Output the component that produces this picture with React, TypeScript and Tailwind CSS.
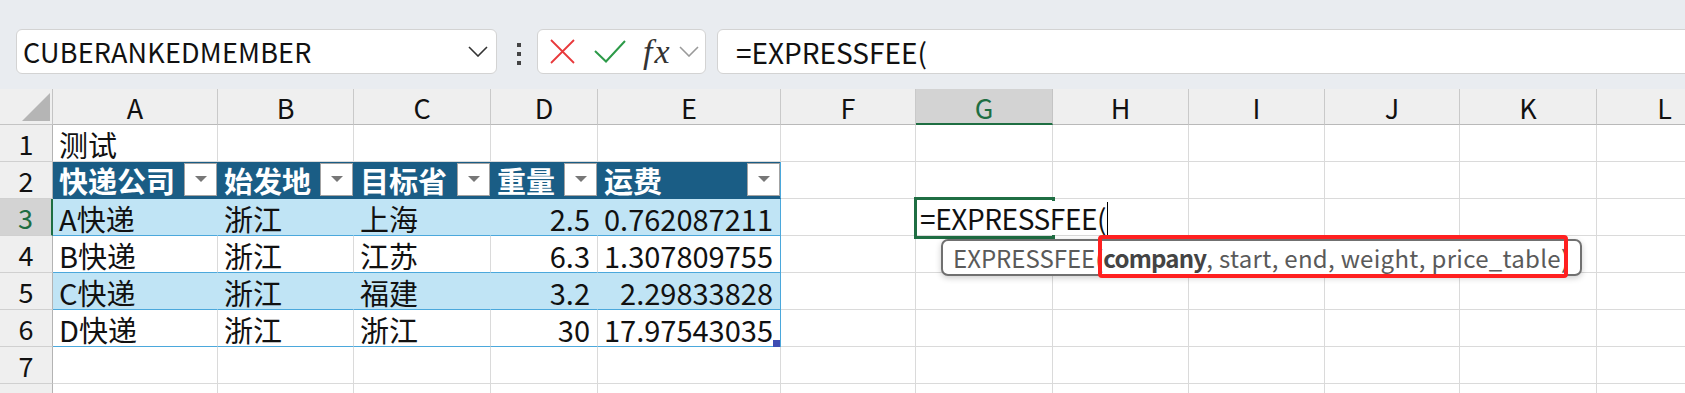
import React from 'react';

const colLetters = ['A', 'B', 'C', 'D', 'E', 'F', 'G', 'H', 'I', 'J', 'K', 'L'];
const rows: string[][] = [
  ['测试', '', '', '', ''],
  ['快递公司', '始发地', '目标省', '重量', '运费'],
  ['A快递', '浙江', '上海', '2.5', '0.762087211'],
  ['B快递', '浙江', '江苏', '6.3', '1.307809755'],
  ['C快递', '浙江', '福建', '3.2', '2.29833828'],
  ['D快递', '浙江', '浙江', '30', '17.97543035'],
  [],
  [],
];

function cellCls(r: number, c: number): string {
  const inTable = r >= 2 && r <= 6 && c <= 4;
  if (!inTable) return 'bg-white border-r border-b border-[#dadada]';
  if (r === 2) {
    return c === 4
      ? 'bg-[#1a5d85] border-b border-b-[#1a5d85] border-r border-r-[#4ba8dc] text-white font-bold'
      : 'bg-[#1a5d85] border-b border-b-[#1a5d85] border-r border-r-[#1a5d85] text-white font-bold';
  }
  const band = r === 3 || r === 5;
  if (band) {
    return c === 4
      ? 'bg-[#c0e4f5] border-b border-b-[#4ba8dc] border-r border-r-[#4ba8dc]'
      : 'bg-[#c0e4f5] border-b border-b-[#4ba8dc] border-r border-r-[#c0e4f5]';
  }
  return c === 4
    ? 'bg-white border-b border-b-[#4ba8dc] border-r border-r-[#4ba8dc]'
    : 'bg-white border-b border-b-[#4ba8dc] border-r border-r-[#dadada]';
}

function FilterButton() {
  return (
    <div className="ml-auto mr-[0px] w-[33px] h-[33px] shrink-0 bg-white border border-[#a3a3a3] flex items-center justify-center self-center">
      <div className="w-0 h-0 border-l-[6px] border-r-[6px] border-t-[6px] border-l-transparent border-r-transparent border-t-[#777777]" />
    </div>
  );
}

function Toolbar() {
  return (
    <div className="h-[89px] pt-[29px] pl-[16px] flex items-start">
      <div className="w-[481px] h-[45px] shrink-0 bg-white border border-[#d3d3d3] rounded-[6px] flex items-center pl-[6px] pr-[8px]">
        <span className="text-[27px] leading-[30px] text-[#111] tracking-[0.2px]">CUBERANKEDMEMBER</span>
        <svg className="ml-auto" width="20" height="11" viewBox="0 0 20 11">
          <path d="M1 1 L10 10 L19 1" fill="none" stroke="#333" strokeWidth="1.6" />
        </svg>
      </div>
      <div className="ml-[20px] mt-[14px] w-[4px] flex flex-col gap-[5px] shrink-0">
        <div className="w-[4px] h-[4px] bg-[#444]" />
        <div className="w-[4px] h-[4px] bg-[#444]" />
        <div className="w-[4px] h-[4px] bg-[#444]" />
      </div>
      <div className="ml-[16px] w-[169px] h-[45px] shrink-0 bg-white border border-[#d3d3d3] rounded-[6px] flex items-center">
        <svg className="ml-[12px]" width="25" height="25" viewBox="0 0 25 25">
          <path d="M1 1 L24 24 M24 1 L1 24" fill="none" stroke="#e8383b" strokeWidth="1.8" />
        </svg>
        <svg className="ml-[19px]" width="32" height="23" viewBox="0 0 32 23">
          <path d="M1 11 L12 21.5 L31 1" fill="none" stroke="#2c9a48" strokeWidth="2" />
        </svg>
        <span className="ml-[17px] font-['Liberation_Serif',serif] italic text-[34px] leading-[34px] tracking-[2px] text-[#333] mt-[1px]">fx</span>
        <svg className="ml-[7px]" width="20" height="11" viewBox="0 0 20 11">
          <path d="M1 1 L10 10 L19 1" fill="none" stroke="#9a9a9a" strokeWidth="1.6" />
        </svg>
      </div>
      <div className="ml-[11px] w-[1000px] h-[45px] shrink-0 bg-white border border-[#d3d3d3] rounded-l-[6px] flex items-center pl-[18px]">
        <span className="text-[28px] leading-[30px] text-[#111]">=EXPRESSFEE(</span>
      </div>
    </div>
  );
}

function Sheet() {
  return (
    <div className="grid grid-cols-[53px_165px_136px_137px_107px_183px_135px_137px_136px_136px_135px_137px_136px] grid-rows-[36px_repeat(8,37px)] w-[1833px]">
      <div className="relative bg-[#efefef] border-r border-b border-[#c4c4c4]">
        <svg className="absolute left-[22px] top-[4px]" width="28" height="28" viewBox="0 0 28 28">
          <path d="M28 0 L28 28 L0 28 Z" fill="#b5b5b5" />
        </svg>
      </div>
      {colLetters.map((l) =>
        l === 'G' ? (
          <div
            key={l}
            className="bg-[#d3d3d3] border-r border-r-[#c4c4c4] border-b-2 border-b-[#1e6e42] flex items-center justify-center text-[27px] leading-[27px] text-[#1e6e42] pt-[2px]"
          >
            {l}
          </div>
        ) : (
          <div
            key={l}
            className="bg-[#efefef] border-r border-r-[#c9c9c9] border-b border-b-[#b9b9b9] flex items-center justify-center text-[27px] leading-[27px] text-[#111] pt-[2px]"
          >
            {l}
          </div>
        )
      )}
      {rows.map((row, ri) => {
        const r = ri + 1;
        return (
          <React.Fragment key={r}>
            {r === 3 ? (
              <div className="bg-[#d3d3d3] border-r-2 border-r-[#1e6e42] border-b border-b-[#d0d0d0] flex items-end justify-center pb-[3px] text-[27px] leading-[28px] text-[#1e6e42]">
                {r}
              </div>
            ) : (
              <div className="bg-[#efefef] border-r border-r-[#b3b3b3] border-b border-b-[#d0d0d0] flex items-end justify-center pb-[3px] text-[27px] leading-[28px] text-[#111]">
                {r}
              </div>
            )}
            {colLetters.map((_, c) => {
              const txt = row[c] ?? '';
              const numeric = r >= 3 && (c === 3 || c === 4);
              return (
                <div
                  key={c}
                  className={
                    cellCls(r, c) +
                    ' flex items-end pb-[2px] text-[29px] leading-[29px] whitespace-nowrap ' +
                    (numeric ? 'justify-end pr-[7px] pl-[4px]' : 'pl-[6px] pr-0')
                  }
                >
                  {r === 2 && c <= 4 ? (
                    <>
                      <span className="pb-[1px]">{txt}</span>
                      <FilterButton />
                    </>
                  ) : (
                    <span>{txt}</span>
                  )}
                </div>
              );
            })}
          </React.Fragment>
        );
      })}
    </div>
  );
}

export default function App() {
  return (
    <div className="relative w-[1685px] h-[393px] overflow-hidden bg-[#e9ecf0] font-['Noto_Sans_CJK_SC',sans-serif] text-[#111]">
      <Toolbar />
      <Sheet />
      {/* fill handle */}
      <div className="absolute left-[773px] top-[340px] w-[7px] h-[7px] bg-[#3e4db3]" />
      {/* active cell editor */}
      <div className="absolute left-[914px] top-[197px] w-[141px] h-[42px] border-[3px] border-[#1f6e43]" />
      <div className="absolute left-[920px] top-[201px] flex items-center bg-white">
        <span className="text-[28px] leading-[34px] text-[#111] tracking-[-0.4px]">=EXPRESSFEE(</span>
        <span className="ml-[1px] w-[1px] h-[33px] bg-black" />
      </div>
      {/* argument tooltip */}
      <div className="absolute left-[941px] top-[239px] w-[641px] h-[37px] rounded-[7px] border-2 border-[#707070] bg-white shadow-[0_2px_6px_rgba(0,0,0,0.2)] flex items-center pl-[10px] text-[24px] leading-[28px] text-[#5a5a5a] whitespace-nowrap">
        <span>EXPRESSFEE(</span>
        <span className="font-semibold text-[#444] tracking-[-0.8px]">company</span>
        <span className="tracking-[0.3px]">, start, end, weight, price_table)</span>
      </div>
      {/* red highlight box */}
      <div className="absolute left-[1098px] top-[235px] w-[470px] h-[43px] border-4 border-[#ff2020] rounded-[4px]" />
    </div>
  );
}
